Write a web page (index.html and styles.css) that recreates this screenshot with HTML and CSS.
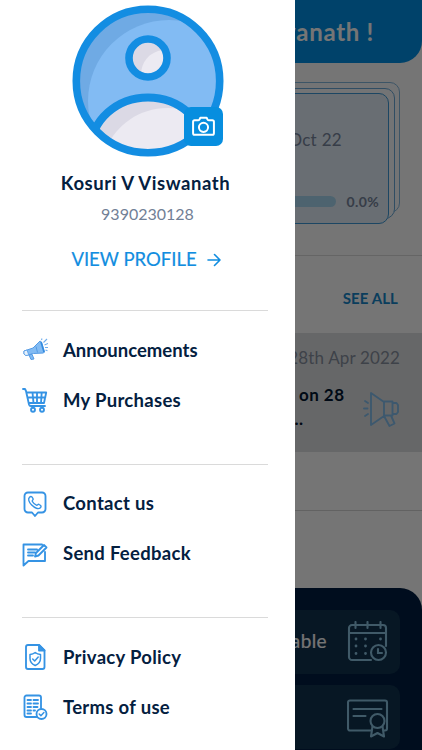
FILE: index.html
```html
<!DOCTYPE html>
<html lang="en">
<head>
<meta charset="utf-8">
<meta name="viewport" content="width=device-width">
<title>Profile menu</title>
<link rel="stylesheet" href="styles.css">
</head>
<body>
<main class="dashboard">
  <header class="hero"><span class="hero-text">Hi Kosuri V Viswanath !</span></header>
  <section class="progress">
    <div class="deck">
      <div class="sheet sheet-back"></div>
      <div class="sheet sheet-middle"></div>
      <div class="plan">
        <span class="plan-date">Oct 22</span>
        <div class="meter"><span class="track"></span><span class="percent">0.0%</span></div>
      </div>
    </div>
  </section>
  <div class="section-head"><span class="see-all">SEE ALL</span></div>
  <article class="notice">
    <span class="notice-date">28th Apr 2022</span>
    <div class="notice-row">
      <p class="notice-text">on 28<br><span class="dots">...</span></p>
      <svg class="horn" viewBox="0 0 38 38" fill="none" stroke="#85c1ef" stroke-width="1.900" stroke-linejoin="round" stroke-linecap="round"><path d="M9 3v32l13-9V12zM22 11.500h8.500v14H22M30.500 13h4l1.500 2v7l-1.500 2h-4M22 26l5.500 10 5-2.500-3.500-8M2 18.500h3.500M3 11l3 2M3 26l3-2"/></svg>
    </div>
  </article>
  <div class="spacer"></div>
  <section class="tools">
    <div class="tool"><span>Time Table</span>
      <svg viewBox="0 0 42 42" fill="none" stroke="#8cc5e2" stroke-width="2.100" stroke-linecap="round"><path d="M24 39H5a3 3 0 0 1-3-3V7a3 3 0 0 1 3-3h31a3 3 0 0 1 3 3v18M2 12h37M8.500 1v6M20.500 1v6M33.500 1v6"/><circle cx="31.500" cy="31.500" r="7.500"/><path d="M31 28v4h4"/><path stroke-width="2.800" d="M9 18h.01M18.500 18h.01M33.500 18h.01M9 25h.01M18.500 25h.01M9 32.500h.01M18.500 32.500h.01"/></svg>
    </div>
    <div class="tool"><span></span>
      <svg viewBox="0 0 42 42" fill="none" stroke="#8cc5e2" stroke-width="2.100" stroke-linejoin="round" stroke-linecap="round"><path d="M24 34.500H3a2 2 0 0 1-2-2V6.500a2 2 0 0 1 2-2h35a2 2 0 0 1 2 2v26a2 2 0 0 1-2 2h-1M6.500 13h28M6.500 20h12"/><circle cx="30.500" cy="25" r="7"/><path d="M25.500 30.500l-1.500 10 6.500-3.500 6.500 3.500-1.500-10"/></svg>
    </div>
  </section>
</main>
<div class="scrim"></div>
<aside class="drawer">
  <section class="profile">
    <div class="portrait">
      <svg class="avatar" viewBox="0 0 152 152">
        <defs><clipPath id="disc"><circle cx="76" cy="76" r="72"/></clipPath></defs>
        <g clip-path="url(#disc)">
          <path fill="#6faae4" d="M0 0h152v152H0z"/>
          <circle cx="97" cy="96" r="81" fill="#82bbf3"/>
          <ellipse cx="76" cy="144" rx="60" ry="51.500" fill="#dbd9e5"/>
          <path fill="#eceaf2" d="M35 142c9-21 31-39 61-39 14 0 27 6 40 19v40H35z"/>
          <ellipse cx="76" cy="144" rx="57" ry="51.500" fill="none" stroke="#138de2" stroke-width="8"/>
        </g>
        <circle cx="76" cy="53" r="19" fill="#dbd9e5"/>
        <path fill="#eceaf2" d="M69 70c0-13 8-23 22-25 8 16-2 28-15 28z"/>
        <circle cx="76" cy="53" r="19" fill="none" stroke="#138de2" stroke-width="7.600"/>
        <circle cx="76" cy="76" r="71.700" fill="none" stroke="#138de2" stroke-width="7.600"/>
      </svg>
      <div class="camera"><svg viewBox="0 0 24 24" fill="none" stroke="#fff" stroke-width="1.900" stroke-linejoin="round"><path d="M3.500 6H7q1 0 1.300-1l.7-1.500h6l.7 1.500q.3 1 1.300 1h3.500q1.500 0 1.500 1.500v11q0 1.500-1.500 1.500h-17Q2 20 2 18.500v-11Q2 6 3.500 6z"/><circle cx="12" cy="12.800" r="4.400"/></svg></div>
    </div>
    <h1 class="name">Kosuri V Viswanath</h1>
    <p class="phone">9390230128</p>
    <a class="view"><span>VIEW PROFILE</span><svg viewBox="0 0 14 14" fill="none" stroke="#118de0" stroke-width="1.600" stroke-linecap="round" stroke-linejoin="round"><path d="M1 7h12M7.500 1.500L13 7l-5.500 5.500"/></svg></a>
  </section>
  <nav class="menu">
    <div class="group">
      <a class="item tight"><svg viewBox="0 0 26 26" stroke-linejoin="round"><path d="M2 14l9-3 7-7 1.500 1 3 10-1 1-10 .500L4 18.500l-2-1.500z" fill="#82bbf3" stroke="#559be4" stroke-width="1"/><path d="M2 14l3-1 1.800 5-3 .500-1.800-1.500z" fill="#e5f1fc" stroke="#559be4" stroke-width=".8"/><path d="M7 18l3-.700 2 4.700-3 .500zM14 9.500l1.500 6" fill="#82bbf3" stroke="#559be4"/><path d="M19 5l3 10" stroke="#338be0" stroke-width="1.600"/><path d="M19.500 3l.500-1.500M21.500 5.500L25 2M22.500 8l3.500-1.500M23 10.500h3M23.500 13l2 .800" stroke="#70aeed" stroke-width="1.100" fill="none"/></svg><span>Announcements</span></a>
      <a class="item"><svg viewBox="0 0 26 26" class="line"><path d="M1 2h2l1 2 3 13.500a2 2 0 0 0 2 1.500H23M4.500 5.500h19.700L22 16H7M5.800 10.500h17.500M10.500 5.500l1 10.500M15 5.500V16M19.700 5.500L19 16"/><circle cx="11" cy="22.700" r="2"/><circle cx="20" cy="22.700" r="2"/></svg><span>My Purchases</span></a>
    </div>
    <div class="group">
      <a class="item"><svg viewBox="0 0 26 26" class="line"><path d="M6 1.500h14a3.500 3.500 0 0 1 3.500 3.500v13a3.500 3.500 0 0 1-3.500 3.500h-4L13 25l-3-3.500H6A3.500 3.500 0 0 1 2.500 18V5A3.500 3.500 0 0 1 6 1.500z"/><path stroke-width="1.400" d="M7.500 6.200c1.500-1.400 2.400-.800 3.600 1.500.600 1.200-1.600 1.400-.7 2.800 1 1.700 2.300 3 4 3.700 1.300.5 1.500-1.600 2.800-.7 2 1.300 2.400 2 1.200 3.200-2 2-5.800.4-8.700-2.600C6.700 11 5.800 7.800 7.500 6.200z"/></svg><span>Contact us</span></a>
      <a class="item"><svg viewBox="0 0 26 26" class="line"><path d="M20 3.500H1.500v21l5-4.500H23v-9M6 8.500h9M6 11.500h7M6 14.500h5M22 4l2.500 2.500-8 8-3.500 1 1-3.500z"/></svg><span>Send Feedback</span></a>
    </div>
    <div class="group">
      <a class="item"><svg viewBox="0 0 26 26" class="line"><path d="M6 1h11l5.500 5.500V23a2 2 0 0 1-2 2H6a2 2 0 0 1-2-2V3a2 2 0 0 1 2-2z"/><path fill="#3e98e8" d="M17 1v5.500h5.500z"/><path stroke-width="1.500" d="M13.200 8.500c1.500 1.200 3.300 1.800 5.300 1.900v4c0 3.500-2 5.600-5.300 7.100C10 20 8 17.900 8 14.400v-4c2-.1 3.700-.7 5.200-1.900zM10.700 15l2 2 3.500-4"/></svg><span>Privacy Policy</span></a>
      <a class="item"><svg viewBox="0 0 26 26" class="line"><path d="M14.500 23h-10a2 2 0 0 1-2-2V3.500a2 2 0 0 1 2-2H17a2 2 0 0 1 2 2V14M5.500 6H9M11.500 6H16M5.500 9.500H9M11.500 9.500H16M5.500 13H9M11.500 13h4M5.500 16.500H9M11.500 16.500H13M5.500 19.500H9"/><circle cx="19.500" cy="20" r="5"/><path stroke-width="1.500" d="M17.200 20l1.700 1.700 3-3.200"/></svg><span>Terms of use</span></a>
    </div>
  </nav>
</aside>
</body>
</html>
```

FILE: styles.css
```css
* { box-sizing: border-box; }
body { margin: 0; width: 422px; height: 750px; overflow: hidden; position: relative; font-family: Lato, "Liberation Sans", sans-serif; background: #fff; }
h1, p { margin: 0; font-weight: inherit; }
svg { flex: none; display: block; }
.dashboard { height: 750px; display: flex; flex-direction: column; white-space: nowrap; }
.hero { height: 63px; flex: none; display: flex; justify-content: flex-end; align-items: center; padding: 0 48px 0 0; background: #0091e8; border-radius: 0 0 22px 0; color: #fff; font-size: 24px; font-weight: 700; letter-spacing: .7px; }
.progress { height: 193px; flex: none; padding: 30px 33px 0 22px; border-bottom: 1px solid #dcdcdc; }
.deck { position: relative; height: 131px; }
.sheet { position: absolute; border: 1px solid #69a9d8; background: #fbfdff; }
.sheet-back { inset: -11px -11px 11px 0; border-radius: 10px; opacity: .8; }
.sheet-middle { inset: -5px -6px 5px 0; border-radius: 10px; }
.plan { position: relative; height: 100%; display: flex; flex-direction: column; justify-content: space-between; align-items: flex-end; padding: 34px 9px 12px; border: 1px solid #3d9ad7; border-radius: 10px; background: #e5f0fa; color: #78869d; }
.plan-date { margin-right: 37px; font-size: 17px; line-height: 24px; letter-spacing: .3px; }
.meter { display: flex; align-items: center; gap: 11px; height: 20px; align-self: stretch; }
.track { flex: 1; height: 11px; border-radius: 6px; background: #a9d8f2; }
.percent { font-size: 14px; font-weight: 700; letter-spacing: .35px; }
.section-head { height: 77px; flex: none; display: flex; align-items: center; justify-content: flex-end; padding: 6px 24px 0; }
.see-all { color: #1687ca; font-size: 15px; font-weight: 700; letter-spacing: .1px; }
.notice { height: 119px; flex: none; background: #dfe1e3; padding: 13px 22px 0; display: flex; flex-direction: column; align-items: flex-end; }
.notice-date { color: #87909f; font-size: 17px; line-height: 24px; letter-spacing: .15px; }
.notice-row { display: flex; gap: 17px; padding-top: 13px; }
.notice-text { width: 46px; color: #00152f; font-size: 17px; line-height: 24px; font-weight: 700; letter-spacing: .45px; }
.dots { margin-left: -9px; }
.horn { width: 38px; height: 38px; margin-top: 7px; }
.spacer { height: 59px; flex: none; border-bottom: 1px solid #d5d5d5; }
.tools { margin-top: 77px; flex: 1; background: #001e42; border-radius: 0 22px 0 0; padding: 22px 22px 0; display: flex; flex-direction: column; gap: 11px; }
.tool { height: 64px; flex: none; border-radius: 10px; background: #10324f; color: #fff; display: flex; align-items: center; justify-content: space-between; padding: 0 11px 0 155px; font-size: 19px; letter-spacing: .4px; }
.tool > span { width: 150px; text-align: right; padding-bottom: 3px; -webkit-text-stroke: .2px; }
.tool svg { width: 42px; height: 42px; }
.scrim { position: absolute; inset: 0; background: rgba(0, 0, 0, .54); }
.drawer { position: absolute; top: 0; left: 0; width: 295px; height: 750px; background: #fff; color: #04203f; }
.profile { height: 310px; padding-top: 5px; display: flex; flex-direction: column; align-items: center; }
.portrait { width: 152px; height: 152px; position: relative; }
.avatar { width: 152px; height: 152px; }
.camera { position: absolute; right: 1px; bottom: 11px; width: 39px; height: 39px; border-radius: 7px; background: #078edf; display: grid; place-items: center; }
.camera svg { width: 25px; height: 25px; }
.name { margin: 13px 0 0 -4px; height: 26px; line-height: 26px; font-size: 18.500px; font-weight: 700; letter-spacing: .55px; white-space: nowrap; }
.phone { margin-top: 5px; height: 26px; line-height: 26px; font-size: 16px; letter-spacing: 0; color: #718096; }
.view { margin: 18px 3px 0 0; height: 28px; display: flex; align-items: center; gap: 10px; color: #118de0; font-size: 18.500px; white-space: nowrap; -webkit-text-stroke: .2px; }
.view svg { width: 14px; height: 14px; margin-top: 2px; }
.menu { margin: 0 27px 0 22px; }
.group { height: 153.500px; border-top: 1px solid #dadada; padding-top: 14.500px; }
.item { height: 49.700px; display: flex; align-items: center; gap: 15px; font-size: 18.500px; font-weight: 700; letter-spacing: .3px; white-space: nowrap; }
.item.tight { letter-spacing: 0; }
.item span { padding-bottom: 1px; }
.item svg { width: 26px; height: 26px; fill: none; }
.line { stroke: #3593e4; stroke-width: 1.850; stroke-linecap: round; stroke-linejoin: round; }
```
